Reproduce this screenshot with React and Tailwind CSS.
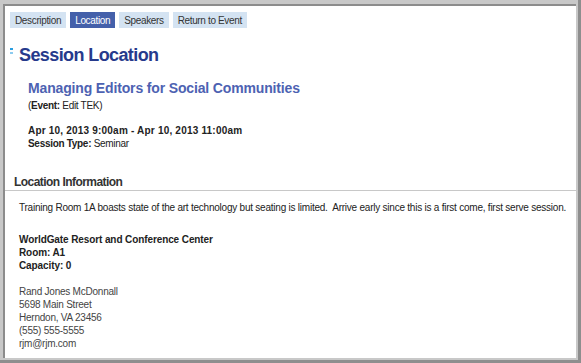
import React from 'react';

const tabs = ['Description', 'Location', 'Speakers', 'Return to Event'];

const App = () => {
  const font = { fontFamily: '"Liberation Sans", Arial, sans-serif' };
  return (
    <div style={font} className="w-[581px] h-[363px] flex bg-[#c8c8c8] pt-[4px] pl-[3px] pr-[2px] pb-[2px] border-r-[3px] border-b-[3px] border-[#8e8e8e]">
      <div className="flex-1 bg-white border-t-2 border-l-2 border-[#8c8c8c] overflow-hidden">
        {/* tab bar */}
        <div className="flex gap-[4px] pl-[5px] pt-[6px]">
          {tabs.map(t => (
            <div
              key={t}
              className={`h-[16px] px-[5px] flex items-center text-[10px] tracking-[-0.35px] ${
                t === 'Location' ? 'bg-[#4460aa] text-white' : 'bg-[#d4e3f2] text-[#333]'
              }`}
            >
              {t}
            </div>
          ))}
        </div>

        <div className="flex items-start mt-[16px] pl-[5px]">
          <div className="flex flex-col gap-[2px] mt-[4px] mr-[6px]">
            <span className="w-[3px] h-[2px] bg-[#2a9ee0]" />
            <span className="w-[3px] h-[2px] bg-[#8ccbf0]" />
          </div>
          <h1 className="text-[18px] leading-[22px] font-bold text-[#263a8c] tracking-[-0.6px]">Session Location</h1>
        </div>

        <div className="pl-[23px] mt-[14px] text-[#222]">
          <h2 className="text-[14px] leading-[17px] mb-[2px] font-bold text-[#4d62b2] tracking-[-0.15px]">Managing Editors for Social Communities</h2>
          <p className="text-[10px] leading-[13px] tracking-[-0.3px]">(<b>Event:</b> Edit TEK)</p>

          <p className="mt-[12px] text-[10px] leading-[13px] font-bold tracking-[0.2px]">Apr 10, 2013 9:00am - Apr 10, 2013 11:00am</p>
          <p className="text-[10px] leading-[13px] tracking-[-0.3px]"><b>Session Type:</b> Seminar</p>
        </div>

        <div className="mt-[25px]">
          <h3 className="pl-[9px] text-[12px] leading-[15px] font-bold text-[#333] tracking-[-0.55px] border-b border-[#c8c8c8]">Location Information</h3>
          <div className="pl-[14px] text-[10px] leading-[13px] text-[#222] tracking-[-0.23px]">
            <p className="mt-[10px] whitespace-pre">Training Room 1A boasts state of the art technology but seating is limited.  Arrive early since this is a first come, first serve session.</p>

            <div className="mt-[19px] font-bold tracking-[-0.1px]">
              <p>WorldGate Resort and Conference Center</p>
              <p>Room: A1</p>
              <p>Capacity: 0</p>
            </div>

            <div className="mt-[13px] text-[#444]">
              <p>Rand Jones McDonnall</p>
              <p>5698 Main Street</p>
              <p>Herndon, VA 23456</p>
              <p>(555) 555-5555</p>
              <p>rjm@rjm.com</p>
            </div>
          </div>
        </div>
      </div>
    </div>
  );
};

export default App;
